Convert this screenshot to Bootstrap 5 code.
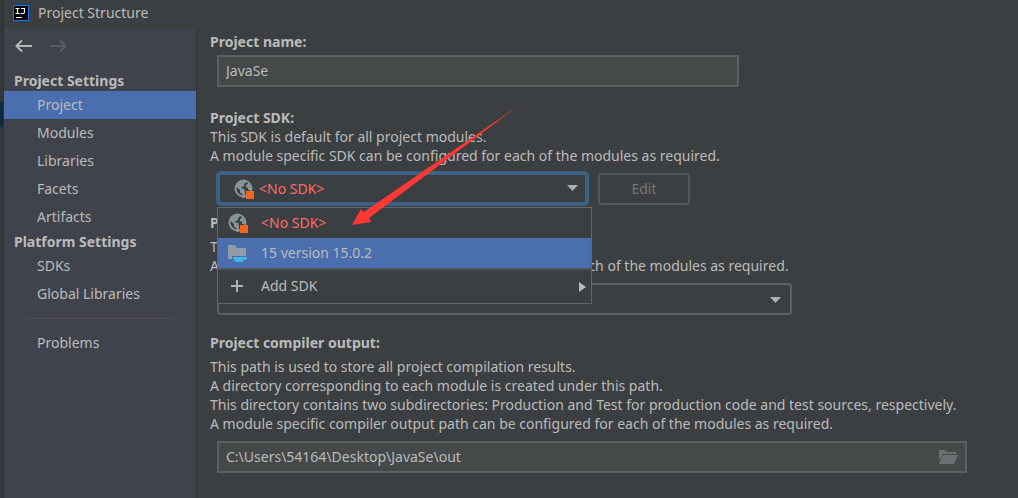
<!DOCTYPE html>
<html lang="en" data-bs-theme="dark">
<head>
<meta charset="utf-8">
<meta name="viewport" content="width=device-width, initial-scale=1">
<title>Project Structure</title>
<link href="https://cdn.jsdelivr.net/npm/bootstrap@5.3.0/dist/css/bootstrap.min.css" rel="stylesheet">
<style>
  :root { --ink: #bbbbbb; --panel: #3c3f41; --side: #40434c; --pick: #4b6eaf; --edge: #5e6163; }
  body { background: var(--panel); color: var(--ink); font: 14px/19px "Noto Sans", "Open Sans", sans-serif; overflow: hidden; }
  .behind { width: 4px; background: #35383a; border-right: 1px solid #2f3234; }
  .behind-tab { height: 25px; margin-top: 78px; background: #0d293e; }
  .titlebar { height: 28px; padding: 0 0 3px 9px; gap: 9px; }
  .sidebar { width: 193px; background: var(--side); border-right: 1px solid #323537; }
  .history { height: 42px; padding: 10px 0 0 10px; gap: 18px; }
  .history button, .browse { border: 0; padding: 0; background: none; line-height: 1; display: flex; }
  .group-title { font-size: 14px; font-weight: 700; line-height: 21px; margin: 0; padding-left: 10px; color: var(--ink); }
  .sidebar .nav-link { color: var(--ink); padding: 0 0 0 33px; line-height: 28px; border-radius: 0; }
  .sidebar .nav-link.active { background: var(--pick); }
  .rule { height: 1px; margin: 10px 8px; background: linear-gradient(90deg, transparent, #55514f 20%, #55514f 80%, transparent); }
  .content { padding: 4px 51px 0 13px; }
  .content section + section { margin-top: 18px; }
  .content .sdk-section { margin-top: 21px; }
  .content .level-section { margin-top: 7px; }
  .heading { display: block; font-weight: 700; }
  .fieldbox { border: 2px solid var(--edge); border-radius: 1px; background: #45494a; color: var(--ink); height: 32px; padding: 0 7px 1px; width: 100%; }
  .indent { margin-left: 7px; }
  .name-field { max-width: 522px; }
  .browse { position: absolute; right: 8px; top: 8px; }
  .combo { appearance: none; background: var(--panel); color: var(--ink); height: 32px; width: 100%; border: 2px solid var(--edge); border-radius: 4px; padding: 0 8px; }
  .sdk-wrap { width: 373px; margin-left: 6px; }
  .sdk-wrap .combo { height: 35px; border: 4px solid #3d6185; border-radius: 5px; padding: 0 0 0 39px; color: #ff6b68; display: block; }
  .level-wrap { max-width: 575px; }
  .caret { position: absolute; right: 10px; top: 13px; pointer-events: none; }
  .sdk-icon { position: absolute; left: 18px; top: 8px; pointer-events: none; }
  .edit { width: 92px; height: 32px; border: 2px solid #55585a; border-radius: 4px; background: none; color: #777777; padding: 0; }
  .sdk-row { margin-top: 6px; gap: 9px; }
  .sdk-menu { position: absolute; left: 1px; top: 36px; width: 375px; z-index: 5; background: var(--panel); border: 1px solid #646768; }
  .sdk-menu button { display: flex; align-items: center; gap: 13px; width: 100%; height: 30px; border: 0; background: none; color: var(--ink); padding: 0 4px 0 10px; }
  .sdk-menu button span { padding-bottom: 2px; }
  .sdk-menu svg { flex: none; }
  .sdk-menu .missing { color: #ff6b68; }
  .sdk-menu .chosen { background: var(--pick); }
  .sdk-menu .add { height: 35px; border-top: 2px solid #515456; }
  .pointer { position: absolute; left: 135px; top: -65px; z-index: 6; pointer-events: none; }
  .lead-gap { margin-top: 5px; }
  .field-gap { margin-top: 8px; }
</style>
</head>
<body>
<svg class="d-none" aria-hidden="true">
  <symbol id="globe" viewBox="0 0 20 20">
    <circle cx="9.500" cy="9.500" r="8" fill="none" stroke="#87939a" stroke-width="2"/>
    <path fill="#87939a" d="M5 2.500 9 1h3v2.500L10 5v2L7.500 8v1.500L11 10v9H8.500v-3.500L6 13.500v-2.500L2 7.500V5zM15 4l3 4v3h-4V9l-2-1V6z"/>
    <path fill="#3c3f41" d="M10 10h2v2h-2z" opacity=".5"/>
    <path fill="#f26522" d="M12 12h8v8h-8z"/>
  </symbol>
</svg>
<div class="d-flex min-vh-100">
  <div class="behind flex-shrink-0 pt-4"><div class="behind-tab"></div></div>
  <div class="d-flex flex-column flex-grow-1">
    <header class="titlebar d-flex align-items-center">
      <svg width="16" height="16" viewBox="0 0 16 16"><path fill="#000" stroke="#087cfa" d="M.5 .5h15v15H.5z"/><path fill="none" stroke="#fff" stroke-width="1.2" d="M2.500 3.500h4M4.500 3.500v5M2.500 8.500h4M8 3.500h3.500v3.500q0 1.500-1.500 1.500H7.500M3 12.500h6"/></svg>
      <span>Project Structure</span>
    </header>
    <div class="d-flex flex-grow-1">
      <nav class="sidebar flex-shrink-0">
        <div class="history d-flex align-items-start">
          <button type="button" aria-label="Back"><svg width="18" height="16" viewBox="0 0 18 16" fill="none" stroke="#b5b7b9" stroke-width="2"><path d="M18 8H3M8 2.500 2.500 8 8 13.500"/></svg></button>
          <button type="button" aria-label="Forward"><svg width="18" height="16" viewBox="0 0 18 16" fill="none" stroke="#5a5d60" stroke-width="2"><path d="M0 8h14M10 2.500 15.500 8 10 13.500"/></svg></button>
        </div>
        <h2 class="group-title">Project Settings</h2>
        <div class="nav flex-column">
          <a class="nav-link active" href="#">Project</a>
          <a class="nav-link" href="#">Modules</a>
          <a class="nav-link" href="#">Libraries</a>
          <a class="nav-link" href="#">Facets</a>
          <a class="nav-link" href="#">Artifacts</a>
        </div>
        <h2 class="group-title">Platform Settings</h2>
        <div class="nav flex-column">
          <a class="nav-link" href="#">SDKs</a>
          <a class="nav-link" href="#">Global Libraries</a>
        </div>
        <div class="rule"></div>
        <div class="nav flex-column"><a class="nav-link" href="#">Problems</a></div>
      </nav>
      <main class="content flex-grow-1">
        <section>
          <label class="heading mb-1" for="pname">Project name:</label>
          <input class="fieldbox name-field indent d-block" id="pname" type="text" value="JavaSe">
        </section>
        <section class="sdk-section">
          <label class="heading" for="sdk">Project SDK:</label>
          <div>This SDK is default for all project modules.</div>
          <div>A module specific SDK can be configured for each of the modules as required.</div>
          <div class="sdk-row d-flex align-items-center">
            <div class="sdk-wrap position-relative">
              <select class="combo" id="sdk"><option>&lt;No SDK&gt;</option><option>15 version 15.0.2</option></select>
              <svg class="sdk-icon" width="20" height="20"><use href="#globe"/></svg>
              <svg class="caret" width="12" height="8"><path fill="#adb0b2" d="M0 1h11L5.500 7z"/></svg>
              <div class="sdk-menu">
                <button type="button" class="missing"><svg width="20" height="20"><use href="#globe"/></svg><span>&lt;No SDK&gt;</span></button>
                <button type="button" class="chosen"><svg width="20" height="20" viewBox="0 0 20 20"><path fill="#8f9ba6" d="M0 2h7l2 3h9v8H4v3H0z"/><path fill="#40b6e0" d="M5 14h12q3 0 2 2-1 1-3 1-1 2-3 2H9q-3 0-4-5z"/></svg><span>15 version 15.0.2</span></button>
                <button type="button" class="add"><svg width="20" height="20" viewBox="0 0 20 20"><path stroke="#afb1b3" stroke-width="2" d="M3 9h12M9 3v12"/></svg><span>Add SDK</span><svg class="ms-auto" width="8" height="12"><path fill="#b5b7b9" d="M0 1v10l7-5z"/></svg></button>
              </div>
              <svg class="pointer" width="168" height="122" viewBox="0 0 168 122"><path fill="#ff3835" d="M167 0 18 112 20 116 1 119 10 103 13 106z"/></svg>
            </div>
            <button class="edit" type="button" disabled>Edit</button>
          </div>
        </section>
        <section class="level-section">
          <label class="heading" for="level">Project language level:</label>
          <div class="lead-gap">This language level is default for all project modules.</div>
          <div>A module specific language level can be configured for each of the modules as required.</div>
          <div class="level-wrap indent field-gap position-relative">
            <select class="combo d-block" id="level"><option></option></select>
            <svg class="caret" width="12" height="8"><path fill="#adb0b2" d="M0 1h11L5.500 7z"/></svg>
          </div>
        </section>
        <section>
          <label class="heading" for="out">Project compiler output:</label>
          <div class="lead-gap">This path is used to store all project compilation results.</div>
          <div>A directory corresponding to each module is created under this path.</div>
          <div class="text-nowrap">This directory contains two subdirectories: Production and Test for production code and test sources, respectively.</div>
          <div>A module specific compiler output path can be configured for each of the modules as required.</div>
          <div class="indent field-gap position-relative">
            <input class="fieldbox d-block" id="out" type="text" value="C:\Users\54164\Desktop\JavaSe\out">
            <button class="browse" type="button" aria-label="Browse"><svg width="20" height="16" viewBox="0 0 20 16"><path fill="#6b7073" d="M0 1h6l2 2h9v2H4L0 12zM4 6h15l-4 9H0z"/></svg></button>
          </div>
        </section>
      </main>
    </div>
  </div>
</div>
<script src="https://cdn.jsdelivr.net/npm/bootstrap@5.3.0/dist/js/bootstrap.bundle.min.js"></script>
</body>
</html>
